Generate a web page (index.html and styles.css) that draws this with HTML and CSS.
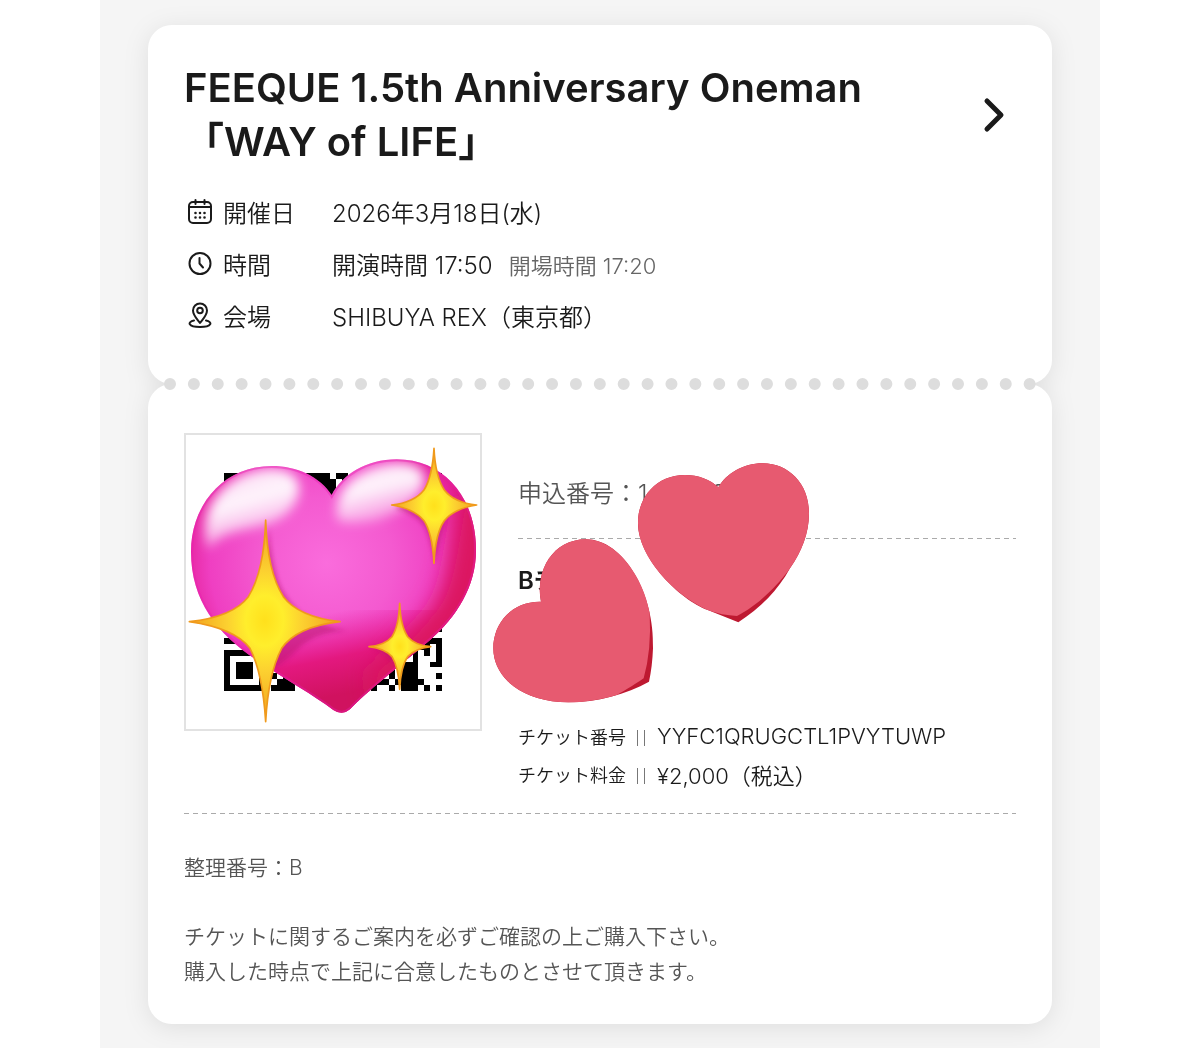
FILE: index.html
```html
<!DOCTYPE html>
<html lang="ja">

<head>
    <meta charset="UTF-8">
    <meta name="viewport" content="width=device-width, initial-scale=1.0">
    <title>FEEQUE 1.5th Anniversary Oneman「WAY of LIFE」</title>
    <link rel="stylesheet" href="styles.css">
</head>

<body>
    <main class="ticket_wrap">
        <div class="ticket">
            <!-- イベント情報 -->
            <section class="card event">
                <a href="#" class="event_link">
                    <h1 class="event_title">FEEQUE 1.5th Anniversary Oneman<br>「WAY of LIFE」</h1>
                    <svg class="chevron" viewBox="0 0 24 36" aria-hidden="true">
                        <path d="M5 4L19 18L5 32" />
                    </svg>
                </a>
                <dl class="event_info">
                    <div class="info_row">
                        <dt>
                            <svg class="icon" viewBox="0 0 24 26" aria-hidden="true">
                                <rect x="1" y="4" width="22" height="21" rx="4" />
                                <path d="M1 9H23M7.500 2V6M16.500 2V6" />
                                <path d="M7.500 15h.01M12 15h.01M16.500 15h.01M7.500 19.500h.01M12 19.500h.01M16.500 19.500h.01" stroke-width="2.600" />
                            </svg>
                            開催日
                        </dt>
                        <dd>2026年3月18日(水)</dd>
                    </div>
                    <div class="info_row">
                        <dt>
                            <svg class="icon" viewBox="0 0 24 26" aria-hidden="true">
                                <circle cx="12" cy="13.500" r="10.500" />
                                <path d="M11.500 8V13.500L15 17.500" />
                            </svg>
                            時間
                        </dt>
                        <dd>開演時間 17:50<span class="open_time">開場時間 17:20</span></dd>
                    </div>
                    <div class="info_row">
                        <dt>
                            <svg class="icon" viewBox="0 0 24 26" aria-hidden="true">
                                <path d="M12 21C8 16 5 13 5 8.500a7 7 0 0 1 14 0C19 13 16 16 12 21Z" />
                                <circle cx="12" cy="8.500" r="2.800" />
                                <path d="M6 18.500C-1 20 0 25 12 25S25 20 18 18.500" />
                            </svg>
                            会場
                        </dt>
                        <dd>SHIBUYA REX（東京都）</dd>
                    </div>
                </dl>
            </section>

            <div class="perforation"></div>

            <!-- チケット詳細 -->
            <section class="card detail">
                <div class="detail_top">
                    <div class="qr_box">
                        <svg class="qr" viewBox="0 0 37 37" shape-rendering="crispEdges" aria-hidden="true">
                            <path d="M0 0h7v7h-7zM30 0h7v7h-7zM14 0h4v1h1v3h-3v-2h-2zM19 0h2v1h-2zM20 1h1v1h-1z" />
                            <path d="M0 28h3v1h-3zM36 26h1v1h-1z" />
                            <path fill-rule="evenodd" d="M0 30h7v7h-7zM1 31v5h5v-5zM2 32h3v3h-3z" />
                            <path d="M8 34h1v1h1v-1h2v3h-4v-1h1v-1h-1zM25 36h1v1h-1zM26 35h2v1h-2zM26 33h3v1h-3zM28 34h1v1h-1zM28 36h1v1h-1z" />
                            <path d="M29 32h3v5h-2v-1h-1v-1h1v-2h-1zM32 30h1v5h1v1h-1v1h-1zM33 28h4v5h-2v-1h1v-3h-1v2h-1v-1h-1zM34 36h1v1h-1zM36 34h1v1h-1zM36 36h1v1h-1z" />
                        </svg>
                        <svg class="sparkle_heart" viewBox="0 0 930 930" aria-hidden="true">
                            <defs>
                                <radialGradient id="pink" gradientUnits="userSpaceOnUse" cx="440" cy="400" r="500">
                                    <stop offset="0" stop-color="#fa6cdc" />
                                    <stop offset="0.400" stop-color="#f45ad0" />
                                    <stop offset="0.700" stop-color="#ef3fc2" />
                                    <stop offset="0.850" stop-color="#e6259f" />
                                    <stop offset="1" stop-color="#d8145f" />
                                </radialGradient>
                                <linearGradient id="base" gradientUnits="userSpaceOnUse" x1="400" y1="560" x2="450" y2="800">
                                    <stop offset="0" stop-color="#e8189c" stop-opacity="0" />
                                    <stop offset="0.550" stop-color="#e3187f" />
                                    <stop offset="1" stop-color="#d0125f" />
                                </linearGradient>
                                <linearGradient id="glossLeft" x1="0" y1="0" x2="0.350" y2="1">
                                    <stop offset="0" stop-color="#fff" stop-opacity="0.750" />
                                    <stop offset="0.500" stop-color="#fff" stop-opacity="0.950" />
                                    <stop offset="1" stop-color="#fff" stop-opacity="0.350" />
                                </linearGradient>
                                <radialGradient id="gold">
                                    <stop offset="0" stop-color="#ffe01c" />
                                    <stop offset="0.250" stop-color="#ffee2c" />
                                    <stop offset="0.500" stop-color="#fcd030" />
                                    <stop offset="1" stop-color="#f0a01e" />
                                </radialGradient>
                                <filter id="soft" x="-30%" y="-30%" width="160%" height="160%">
                                    <feGaussianBlur stdDeviation="17" />
                                </filter>
                                <filter id="softWide" x="-30%" y="-30%" width="160%" height="160%">
                                    <feGaussianBlur stdDeviation="34" />
                                </filter>
                                <filter id="softSmall" x="-30%" y="-30%" width="160%" height="160%">
                                    <feGaussianBlur stdDeviation="7" />
                                </filter>
                                <path id="heartShape" d="M455 195C420 140 350 108 275 108C130 108 33 225 33 365C33 510 110 610 230 690C320 750 400 795 460 840Q487 858 510 838C560 785 650 715 750 630C830 560 888 470 888 360C888 200 790 88 650 88C560 88 485 135 455 195Z" />
                                <clipPath id="heartClip">
                                    <use href="#heartShape" />
                                </clipPath>
                                <path id="starBig" d="M257 270Q262 425 310 500Q355 560 480 575Q350 590 305 655Q265 730 257 875Q248 730 210 655Q165 595 28 575Q160 560 205 500Q252 425 257 270Z" />
                                <path id="starTop" d="M762 55Q766 140 793 180Q822 218 890 225Q822 236 793 272Q766 310 762 400Q757 310 732 272Q702 236 635 225Q702 218 732 180Q757 140 762 55Z" />
                                <path id="starLow" d="M659 520Q662 590 683 620Q704 645 752 650Q704 656 683 680Q662 710 659 778Q655 710 636 680Q615 656 567 650Q615 645 636 620Q656 590 659 520Z" />
                            </defs>
                            <use href="#heartShape" fill="url(#pink)" />
                            <g clip-path="url(#heartClip)">
                                <path d="M0 540H930V900H0Z" fill="url(#base)" />
                                <path d="M840 200C810 340 810 460 750 540C700 600 640 660 560 730L600 900L1000 700V160Z" fill="#dc1260" filter="url(#softWide)" />
                                <g fill="url(#glossLeft)" filter="url(#soft)">
                                    <path d="M78 330C60 210 160 118 275 115C380 118 375 205 315 255C240 310 130 285 84 360Z" />
                                    <path d="M470 260C465 150 570 98 665 98C765 108 740 185 690 220C620 275 550 285 480 275Z" />
                                </g>
                                <g fill="#b8126e" filter="url(#softSmall)" opacity="0.500">
                                    <path d="M268 290Q275 440 320 500Q370 580 500 602Q400 605 345 665Q310 700 270 720L240 600Z" />
                                    <path d="M645 235Q700 250 730 285Q750 320 765 400L800 260L740 200Z" />
                                    <path d="M575 655Q620 665 637 700L670 650Z" />
                                </g>
                                <use href="#heartShape" fill="none" stroke="#e81fae" stroke-width="12" opacity="0.400" />
                            </g>
                            <g stroke="#f09a1c" stroke-width="5" stroke-linejoin="round">
                                <use href="#starBig" fill="url(#gold)" />
                                <use href="#starTop" fill="url(#gold)" />
                                <use href="#starLow" fill="url(#gold)" />
                            </g>
                        </svg>
                    </div>

                    <div class="detail_body">
                        <p class="apply_no">申込番号：1<span class="apply_tail">8</span></p>
                        <hr class="dashed">
                        <p class="seat_type">Bチ</p>
                        <dl class="ticket_info">
                            <div class="ticket_row">
                                <dt>チケット番号</dt>
                                <dd>YYFC1QRUGCTL1PVYTUWP</dd>
                            </div>
                            <div class="ticket_row">
                                <dt>チケット料金</dt>
                                <dd>¥2,000（税込）</dd>
                            </div>
                        </dl>

                        <svg class="two_hearts" viewBox="0 0 1050 840" aria-hidden="true">
                            <path fill="#be1931" d="M715 172C690 148 655 135 615 135C530 135 474 200 474 280C474 385 600 510 683 540L775 577C840 535 895 480 930 415C965 365 987 310 987 250C987 160 925 100 848 100C790 100 740 130 715 172Z" />
                            <path fill="#e75a70" d="M715 172C690 148 655 135 615 135C530 135 474 200 474 280C474 385 590 500 683 540Q725 556 771 558C830 530 895 465 930 415C965 365 987 310 987 250C987 160 925 100 848 100C790 100 740 130 715 172Z" />
                            <path fill="#be1931" d="M183 515C165 420 220 328 318 328C430 328 525 490 519 655Q517 710 507 755C440 793 350 817 265 817C130 817 40 745 40 655C40 575 100 513 183 515Z" />
                            <path fill="#e75a70" d="M183 515C165 420 220 328 318 328C410 328 490 440 509 550Q515 660 491 745C455 770 430 784 410 795C360 810 310 817 265 817C130 817 40 745 40 655C40 575 100 513 183 515Z" />
                        </svg>
                    </div>
                </div>

                <hr class="dashed">

                <div class="notes">
                    <p>整理番号：B</p>
                    <p>チケットに関するご案内を必ずご確認の上ご購入下さい。<br>購入した時点で上記に合意したものとさせて頂きます。</p>
                </div>
            </section>
        </div>
    </main>
</body>

</html>
```
FILE: styles.css
```css
* {
    margin: 0;
    padding: 0;
    box-sizing: border-box;
}

body {
    font-family: Inter, "Noto Sans CJK JP", sans-serif;
    font-weight: 350;
    color: #1a1a1a;
    background: #fff;
}

a {
    text-decoration: none;
    color: inherit;
}

.ticket_wrap {
    max-width: 1000px;
    min-height: 100vh;
    margin: auto;
    padding: 25px 48px 24px;
    background: #f5f5f5;
}

/* 2枚のカードをまとめて影を付ける */
.ticket {
    filter: drop-shadow(0 4px 12px rgba(0, 0, 0, 0.09));
}

.card {
    padding: 36px;
    border-radius: 24px;
    background: #fff;
}

/* イベント情報 */
.event_link {
    display: flex;
    align-items: center;
    justify-content: space-between;
}

.event_title {
    font-size: 40px;
    font-weight: 600;
    line-height: 54px;
}

.chevron {
    flex: none;
    width: 24px;
    height: 36px;
    margin-right: 10px;
    fill: none;
    stroke: #1a1a1a;
    stroke-width: 5;
    stroke-linecap: round;
    stroke-linejoin: round;
}

.event_info {
    padding: 16px 0 7px;
}

.info_row {
    display: flex;
    align-items: center;
    height: 52px;
    font-size: 24px;
}

.info_row dt {
    display: flex;
    align-items: center;
    gap: 11px;
    width: 148px;
    padding-left: 4px;
}

.icon {
    width: 24px;
    height: 26px;
    fill: none;
    stroke: #1a1a1a;
    stroke-width: 2;
    stroke-linecap: round;
    stroke-linejoin: round;
}

.open_time {
    margin-left: 16px;
    font-size: 22px;
    color: #666;
}

/* ミシン目 */
.perforation {
    position: relative;
    z-index: 1;
    margin: -6px 16px;
    border-top: 12px dotted #ddd;
}

/* チケット詳細 */
.detail {
    padding-top: 49px;
    padding-bottom: 35px;
}

.detail_top {
    display: flex;
    gap: 36px;
    margin-bottom: 20px;
}

.qr_box {
    position: relative;
    flex: none;
    width: 298px;
    height: 298px;
    padding: 38px;
    border: 2px solid #e2e2e2;
}

.qr {
    display: block;
    width: 218px;
    height: 218px;
}

.sparkle_heart {
    position: absolute;
    top: -5px;
    left: -6px;
    width: 310px;
    height: 310px;
}

.detail_body {
    position: relative;
    flex: 1;
    padding-top: 41px;
}

.apply_no {
    font-size: 24px;
    line-height: 40px;
    color: #555;
}

.apply_tail {
    margin-left: 64px;
}

.dashed {
    height: 1px;
    border: none;
    background: repeating-linear-gradient(90deg, #aaa 0 5px, transparent 5px 9px);
}

.detail_body .dashed {
    margin-top: 24px;
}

.seat_type {
    margin: 22px 0 116px;
    font-size: 24px;
    font-weight: 600;
    line-height: 40px;
}

.ticket_row {
    display: flex;
    align-items: center;
    height: 38px;
}

.ticket_row dt {
    font-size: 18px;
}

.ticket_row dt::after {
    content: "";
    display: inline-block;
    width: 6px;
    height: 16px;
    margin: 0 12px 0 11px;
    border: solid #777;
    border-width: 0 1px;
    vertical-align: -2px;
}

.ticket_row dd {
    font-size: 22px;
}

.two_hearts {
    position: absolute;
    top: -3px;
    left: -38px;
    width: 350px;
    height: 280px;
}

.notes {
    padding-top: 36px;
    font-size: 21px;
    line-height: 35px;
    color: #555;
}

.notes p + p {
    margin-top: 34px;
}
```
